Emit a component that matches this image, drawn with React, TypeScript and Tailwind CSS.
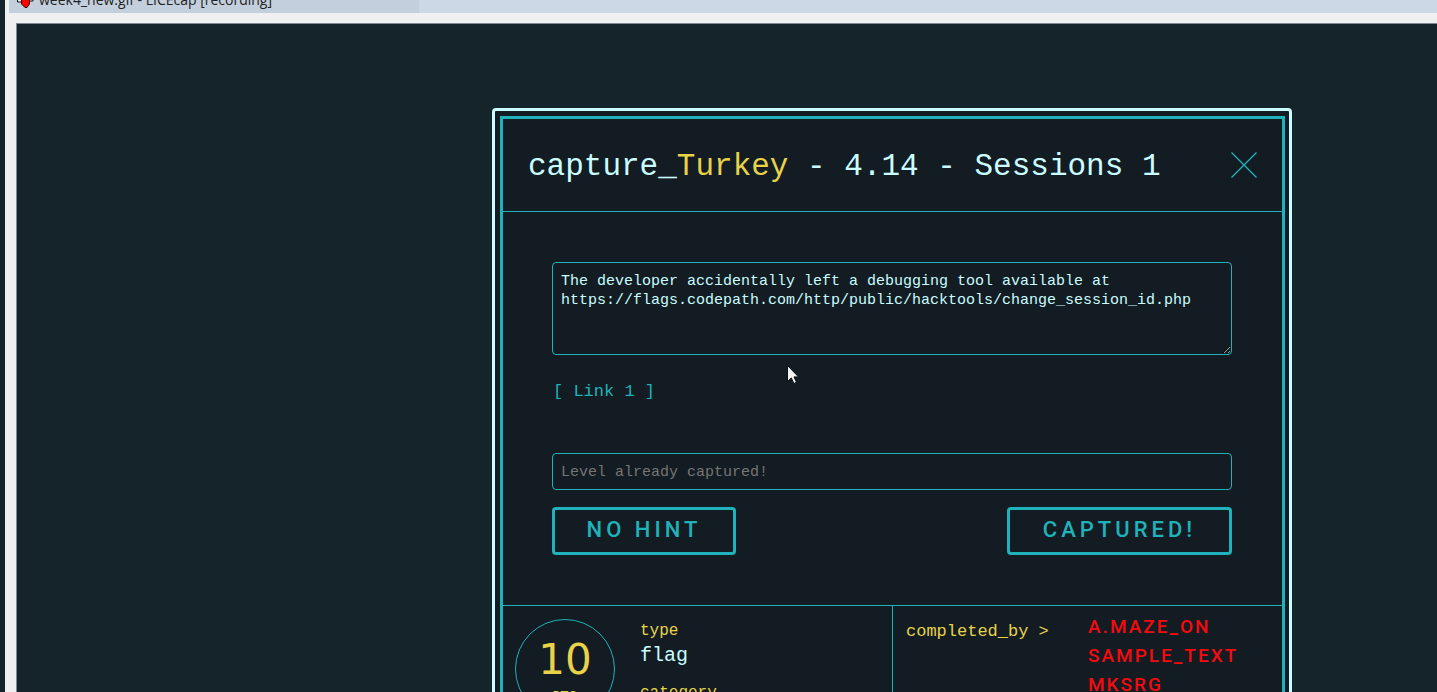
const names = ["A.MAZE_ON", "SAMPLE_TEXT", "MKSRG"];

function TitleBar() {
  return (
    <header className="ml-1 flex h-[13px] shrink-0 bg-[#ccd8e6]">
      <div className="flex w-[410px] items-end gap-1 overflow-hidden bg-[#c3cfdd] pl-2">
        <svg width="18" height="16" viewBox="0 0 18 16" className="mb-[5px] shrink-0" aria-hidden="true">
          <path d="M.5 3v7h5M16 3v6h-3" fill="#eee" stroke="#111" />
          <path d="M8 15.5L4.500 12V7.500h8V12L10 15.500z" fill="#f00" stroke="#300" />
        </svg>
        <span className="mb-[3px] whitespace-nowrap font-['Open_Sans',sans-serif] text-[14px] leading-5 text-[#222]">
          week4_new.gif - LICEcap [recording]
        </span>
      </div>
    </header>
  );
}

function ChallengeForm() {
  return (
    <form className="flex flex-col pt-[50px] pr-[50px] pb-[50px] pl-[49px]" onSubmit={(e) => e.preventDefault()}>
      <textarea
        aria-label="Description"
        className="block h-[93px] w-full overflow-hidden rounded border border-[#20b2bb] bg-transparent px-2 pt-[9px] text-[15px] leading-[19px] text-[#cbfcff] outline-none"
        defaultValue={
          "The developer accidentally left a debugging tool available at https://flags.codepath.com/http/public/hacktools/change_session_id.php"
        }
      />
      <a href="#link-1" className="mt-[25px] self-start pl-px text-[17px] leading-6 text-[#20b2bb]">
        [ Link 1 ]
      </a>
      <input
        aria-label="Flag"
        placeholder="Level already captured!"
        className="mt-[49px] h-[37px] w-full rounded border border-[#20b2bb] bg-transparent px-2 pt-[2px] text-[15px] outline-none placeholder:text-[#757575]"
      />
      <div className="mt-[17px] flex justify-between font-['Roboto',sans-serif] text-[22px] leading-6 font-medium tracking-[4px] text-[#20b2bb]">
        <button type="button" className="h-12 w-[184px] rounded border-3 border-[#20b2bb] pb-[2px]">
          NO HINT
        </button>
        <button type="submit" className="h-12 w-[225px] rounded border-3 border-[#20b2bb] pb-[2px]">
          CAPTURED!
        </button>
      </div>
    </form>
  );
}

function Details() {
  return (
    <div className="grid min-h-60 grid-cols-[1fr_390px] border-t border-[#20b2bb]">
      <section className="flex items-start gap-[25px] pt-[13px] pl-3">
        <div className="flex size-[100px] flex-col items-center rounded-full border border-[#20b2bb] pt-4 font-['DejaVu_Sans',sans-serif] text-[#e8d24a]">
          <span className="text-[42px] leading-[48px]">10</span>
          <span className="mt-1 text-[12px] leading-4 tracking-[1px] text-[#e8d24a]">PTS</span>
        </div>
        <dl>
          <dt className="text-[16px] leading-6 text-[#e8d24a]">type</dt>
          <dd className="pt-px text-[20px] leading-6 text-[#cbfcff]">flag</dd>
          <dt className="mt-[13px] text-[16px] leading-6 text-[#e8d24a]">category</dt>
        </dl>
      </section>
      <section className="flex items-start justify-between border-l border-[#20b2bb] pt-[6px] pr-[42px] pl-[13px]">
        <h2 className="pt-2 text-[17px] leading-6 text-[#e8d24a]">completed_by &gt;</h2>
        <ul className="w-[152px] font-['Roboto',sans-serif] text-[19px] leading-[29px] font-medium tracking-[2px] whitespace-nowrap text-[#f50a0f]">
          {names.map((name) => (
            <li key={name}>{name}</li>
          ))}
        </ul>
      </section>
    </div>
  );
}

function Pointer() {
  return (
    <svg
      className="pointer-events-none absolute top-[365px] left-[787px]"
      width="14"
      height="21"
      viewBox="0 0 14 21"
      aria-hidden="true"
    >
      <path d="M.5.5v16l3.800-3.600 2.600 5.600 2.600-1.200-2.500-5.400h4.500z" fill="#f2f2f2" stroke="#0b1116" />
    </svg>
  );
}

export default function App() {
  return (
    <div className="relative h-screen overflow-hidden bg-[#14242a] pl-[5px] font-['Liberation_Mono',monospace]">
      <div className="flex h-full flex-col bg-[#f0f0f0]">
        <TitleBar />
        <main className="mt-[10px] ml-[11px] flex flex-1 items-start overflow-hidden border-t border-l border-[#828790] bg-[#14242a] pt-[84px] pr-[145px] pl-[475px]">
          <div
            role="dialog"
            aria-labelledby="title"
            className="w-full shrink-0 rounded border-3 border-[#cbfcff] bg-[#121c22] pt-[5px] pr-1 pl-[5px]"
          >
            <div className="border-3 border-[#20b2bb]">
              <div className="flex h-[93px] items-center justify-between border-b border-[#20b2bb] px-[25px]">
                <h1 id="title" className="pt-1 text-[31px] leading-10 whitespace-nowrap text-[#cbfcff]">
                  capture_<span className="text-[#e8d24a]">Turkey</span> - 4.14 - Sessions 1
                </h1>
                <button type="button" aria-label="Close" className="text-[#20b2bb]">
                  <svg width="26" height="26" viewBox="0 0 26 26" stroke="currentColor" strokeWidth="1.3" aria-hidden="true">
                    <path d="M.5.5l25 25M25.500.5l-25 25" />
                  </svg>
                </button>
              </div>
              <ChallengeForm />
              <Details />
            </div>
          </div>
        </main>
      </div>
      <Pointer />
    </div>
  );
}
